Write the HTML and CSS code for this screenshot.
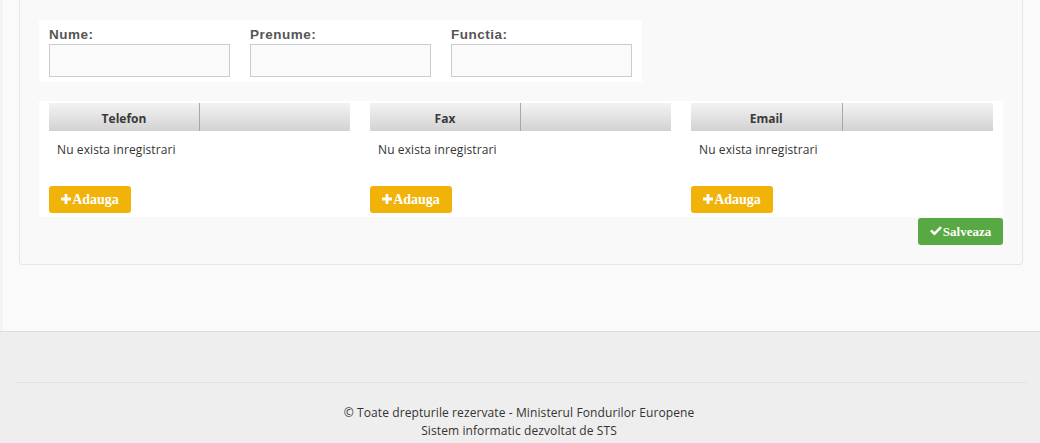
FILE: index.html
```html
<!DOCTYPE html>
<html>
<head>
<meta charset="utf-8">
<link rel="stylesheet" href="styles.css">
</head>
<body>
<div class="main">
  <div class="panel">
    <div class="fields">
      <div class="field"><label>Nume:</label><div class="input"></div></div>
      <div class="field"><label>Prenume:</label><div class="input"></div></div>
      <div class="field"><label>Functia:</label><div class="input"></div></div>
    </div>
    <div class="grids">
      <div class="grid">
        <div class="ghead"><div class="gcol">Telefon</div><div class="gcol"></div></div>
        <div class="empty">Nu exista inregistrari</div>
        <button class="btn btn-add"><svg class="ico" width="10" height="10" viewBox="0 0 10 10"><path d="M3.6 0h2.8v3.6H10v2.8H6.4V10H3.6V6.4H0V3.6h3.6z" fill="#fff"/></svg>Adauga</button>
      </div>
      <div class="grid">
        <div class="ghead"><div class="gcol">Fax</div><div class="gcol"></div></div>
        <div class="empty">Nu exista inregistrari</div>
        <button class="btn btn-add"><svg class="ico" width="10" height="10" viewBox="0 0 10 10"><path d="M3.6 0h2.8v3.6H10v2.8H6.4V10H3.6V6.4H0V3.6h3.6z" fill="#fff"/></svg>Adauga</button>
      </div>
      <div class="grid">
        <div class="ghead"><div class="gcol">Email</div><div class="gcol"></div></div>
        <div class="empty">Nu exista inregistrari</div>
        <button class="btn btn-add"><svg class="ico" width="10" height="10" viewBox="0 0 10 10"><path d="M3.6 0h2.8v3.6H10v2.8H6.4V10H3.6V6.4H0V3.6h3.6z" fill="#fff"/></svg>Adauga</button>
      </div>
    </div>
    <div class="actions">
      <button class="btn btn-save"><svg class="ico" width="12" height="10" viewBox="0 0 12 10"><path d="M0 5.2l1.8-1.8 2.6 2.6L10.2 0.2 12 2 4.4 9.6z" fill="#fff"/></svg>Salveaza</button>
    </div>
  </div>
</div>
<footer class="footer">
  <div class="fline"></div>
  <div class="ftext">
    <div>© Toate drepturile rezervate - Ministerul Fondurilor Europene</div>
    <div>Sistem informatic dezvoltat de STS</div>
  </div>
</footer>
</body>
</html>
```

FILE: styles.css
```css
html, body {
  margin: 0;
  padding: 0;
}
body {
  background: #fafafa;
  font-family: "Open Sans", sans-serif;
  color: #333;
  width: 1040px;
  height: 443px;
  overflow: hidden;
}
.main {
  height: 331px;
  box-sizing: border-box;
  padding: 0 17px 0 16px;
  border-left: 3px solid #f3f3f3;
}
.panel {
  box-sizing: border-box;
  height: 265px;
  border: 1px solid #e6e6e6;
  border-top: none;
  border-radius: 0 0 4px 4px;
  background: #f9f9f9;
  padding: 20px 19px 0 19px;
}
.fields {
  width: 603px;
  box-sizing: border-box;
  background: #fff;
  padding: 6px 10px 5px 10px;
  display: flex;
  gap: 20px;
}
.field {
  width: 181px;
  display: flex;
  flex-direction: column;
}
.field label {
  font-family: "Liberation Sans", Arial, sans-serif;
  font-weight: bold;
  font-size: 13.5px;
  letter-spacing: 0.5px;
  color: #555;
  line-height: 18px;
}
.input {
  height: 33px;
  box-sizing: border-box;
  border: 1px solid #ccc;
  background: #fafafa;
}
.grids {
  margin-top: 19px;
  background: #fff;
  padding: 2px 10px 4px 10px;
  display: grid;
  grid-template-columns: 301px 301px 302px;
  column-gap: 20px;
}
.grid {
  display: flex;
  flex-direction: column;
  align-items: flex-start;
}
.ghead {
  display: flex;
  width: 100%;
  height: 28px;
  background: linear-gradient(#f3f3f3, #d2d2d2);
}
.gcol {
  flex: 1;
  text-align: center;
  font-weight: bold;
  font-size: 12px;
  line-height: 31px;
  color: #3a3a3a;
}
.gcol + .gcol {
  border-left: 1px solid #a8a8a8;
}
.empty {
  font-size: 12px;
  letter-spacing: 0.1px;
  line-height: 16px;
  padding: 11px 0 0 8px;
  height: 44px;
  box-sizing: border-box;
  color: #333;
}
.btn {
  border: none;
  border-radius: 3px;
  color: #fff;
  font-family: "Liberation Serif", "Times New Roman", serif;
  font-weight: bold;
  font-size: 14px;
  height: 27px;
  padding: 0;
  margin-top: 11px;
  display: flex;
  align-items: center;
  justify-content: center;
}
.btn .ico {
  margin-right: 1px;
  margin-top: -1px;
}
.btn-add {
  width: 82px;
  background: #f1b30a;
}
.actions {
  display: flex;
  justify-content: flex-end;
}
.btn-save {
  margin-top: 1px;
  width: 85px;
  font-size: 13px;
  background: #58a843;
}
.footer {
  height: 112px;
  box-sizing: border-box;
  border-top: 1px solid #dcdcdc;
  background: #eeeeee;
  padding: 50px 14px 0 16px;
}
.fline {
  border-top: 1px solid #e2e2e2;
}
.ftext {
  text-align: center;
  font-size: 12px;
  letter-spacing: 0.1px;
  line-height: 18px;
  color: #333;
  padding-top: 21px;
  padding-right: 4px;
}
```
